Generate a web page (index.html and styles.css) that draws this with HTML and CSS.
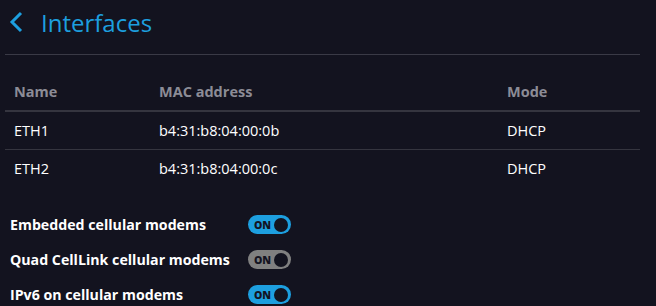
FILE: index.html
```html
<!DOCTYPE html>
<html lang="en">
<head>
    <meta charset="UTF-8">
    <title>Interfaces</title>
    <link rel="stylesheet" href="styles.css">
</head>
<body>
    <div class="page">
        <div class="title-bar">
            <svg class="back" width="16" height="22" viewBox="0 0 16 22">
                <path d="M14 2 L5 11 L14 20" fill="none" stroke="#1d9fdf" stroke-width="3"/>
            </svg>
            <h1>Interfaces</h1>
        </div>

        <table class="iface-table">
            <thead>
                <tr>
                    <th class="col-name">Name</th>
                    <th class="col-mac">MAC address</th>
                    <th>Mode</th>
                </tr>
            </thead>
            <tbody>
                <tr>
                    <td>ETH1</td>
                    <td>b4:31:b8:04:00:0b</td>
                    <td>DHCP</td>
                </tr>
                <tr>
                    <td>ETH2</td>
                    <td>b4:31:b8:04:00:0c</td>
                    <td>DHCP</td>
                </tr>
            </tbody>
        </table>

        <div class="settings">
            <div class="setting">
                <span class="label">Embedded cellular modems</span>
                <span class="toggle on"><span class="toggle-text">ON</span><span class="knob"></span></span>
            </div>
            <div class="setting">
                <span class="label">Quad CellLink cellular modems</span>
                <span class="toggle off"><span class="toggle-text">ON</span><span class="knob"></span></span>
            </div>
            <div class="setting">
                <span class="label">IPv6 on cellular modems</span>
                <span class="toggle on"><span class="toggle-text">ON</span><span class="knob"></span></span>
            </div>
        </div>
    </div>
</body>
</html>
```

FILE: styles.css
```css
body {
    margin: 0;
    background-color: #13131f;
    font-family: 'Open Sans', 'Lato', sans-serif;
    color: #ffffff;
    height: 306px;
    overflow: hidden;
}

.page {
    width: 635px;
    margin-left: 5px;
}

.title-bar {
    display: flex;
    align-items: center;
    height: 44px;
    padding-bottom: 10px;
    border-bottom: 1px solid #3a3a46;
}

.back {
    margin-left: 2px;
    margin-right: 18px;
}

h1 {
    margin: 0;
    font-size: 24px;
    font-weight: 400;
    color: #1d9fdf;
}

.iface-table {
    width: 100%;
    border-collapse: collapse;
    margin-top: 18px;
    font-size: 14.5px;
}

.iface-table th {
    text-align: left;
    color: #8c8c96;
    font-weight: 700;
    height: 37px;
    padding: 0 0 0 9px;
    border-bottom: 2px solid #35353f;
}

.iface-table td {
    height: 37px;
    padding: 0 0 0 9px;
    border-bottom: 1px solid #35353f;
}

.iface-table tbody tr:last-child td {
    border-bottom: none;
}

.col-name {
    width: 136px;
}

.col-mac {
    width: 339px;
}

.settings {
    margin-top: 20px;
    padding-left: 5px;
}

.setting {
    display: flex;
    align-items: center;
    height: 35px;
}

.label {
    width: 238px;
    font-size: 14.2px;
    font-weight: 700;
}

.toggle {
    display: flex;
    align-items: center;
    justify-content: space-between;
    width: 43px;
    height: 19px;
    border-radius: 10px;
    box-sizing: border-box;
    padding: 0 3px 0 6px;
}

.toggle.on {
    background-color: #1d9fdf;
}

.toggle.off {
    background-color: #808080;
}

.toggle-text {
    font-size: 10.5px;
    font-weight: 800;
    color: #13131f;
}

.knob {
    width: 14px;
    height: 14px;
    border-radius: 50%;
    background-color: #13131f;
}
```
